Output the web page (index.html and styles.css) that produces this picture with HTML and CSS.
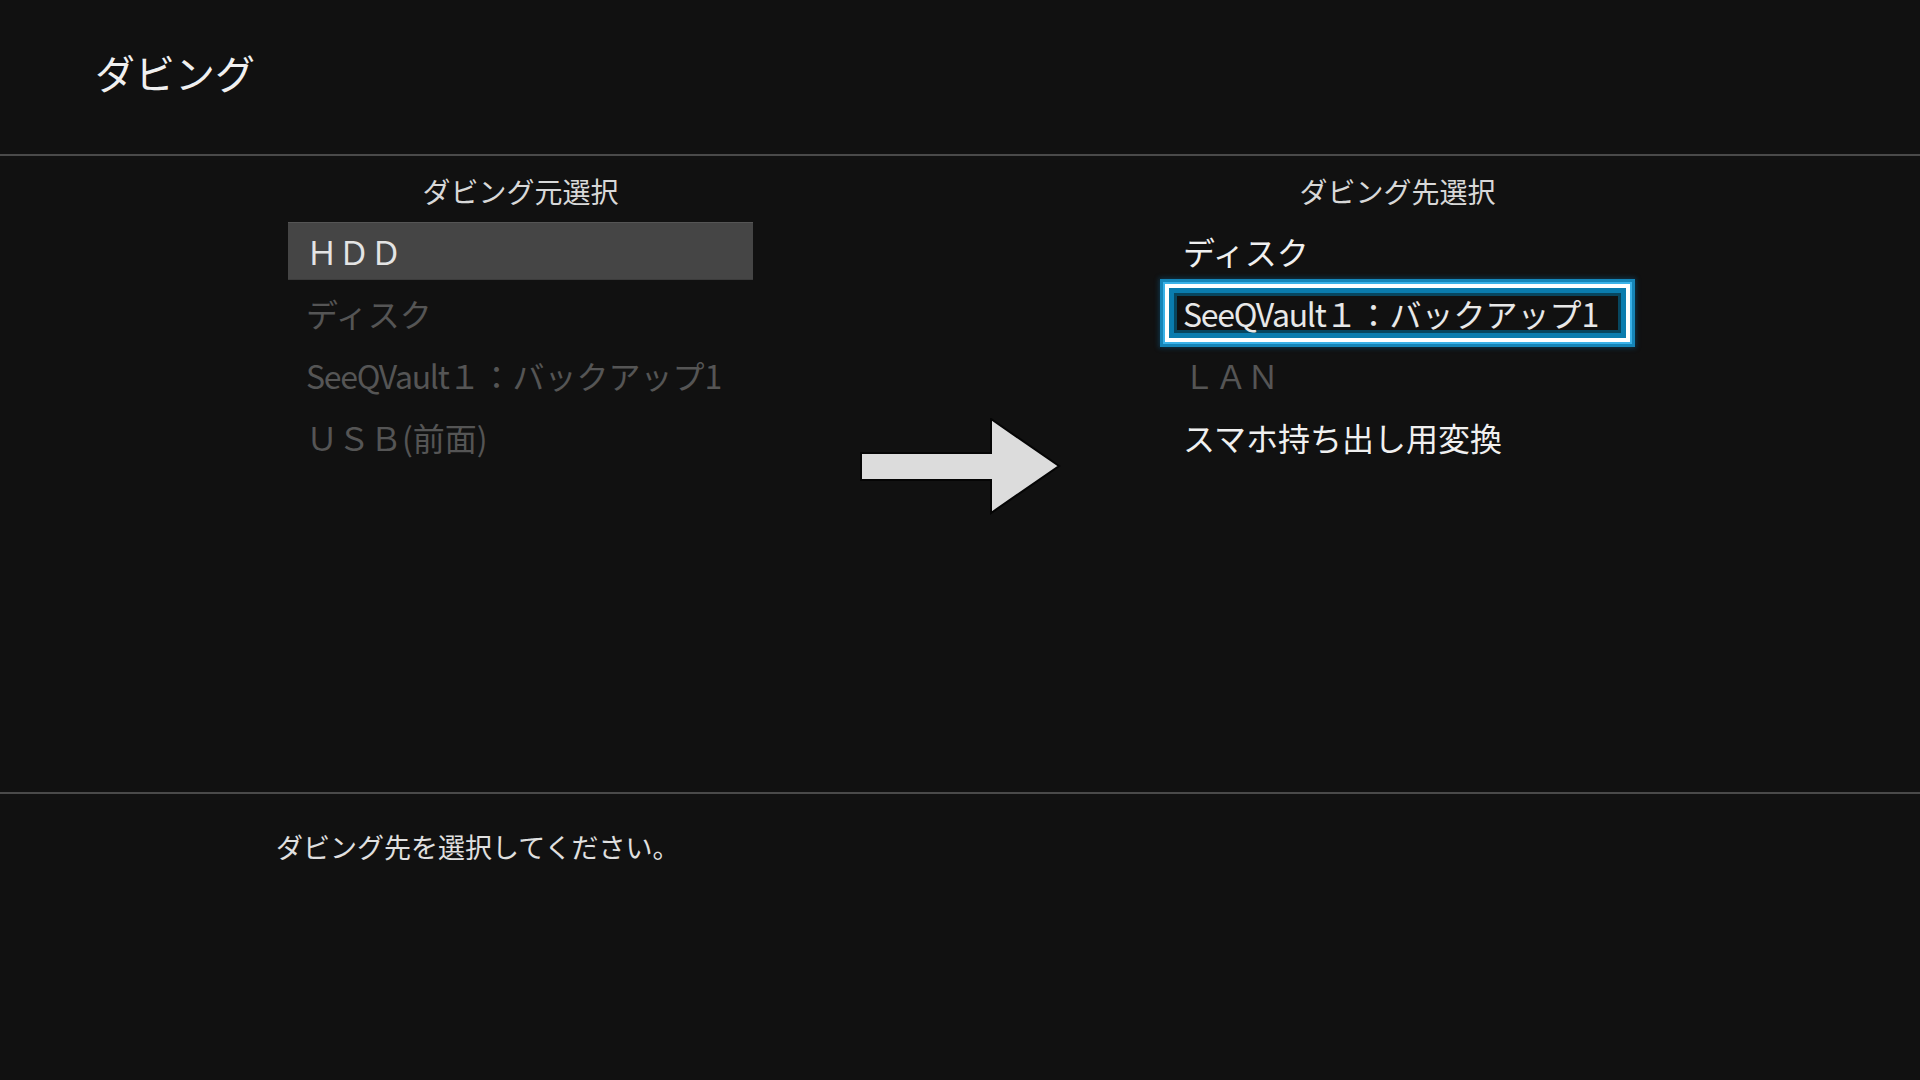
FILE: index.html
```html
<!DOCTYPE html>
<html lang="ja">
<head>
    <meta charset="UTF-8">
    <meta name="viewport" content="width=device-width, initial-scale=1.0">
    <title>ダビング</title>
    <link rel="stylesheet" href="styles.css">
</head>
<body>

    <div class="top-bar">
        <h1>ダビング</h1>
    </div>

    <div class="main">
        <div class="column">
            <div class="column-title">ダビング元選択</div>
            <div class="item-list">
                <div class="item selected">ＨＤＤ</div>
                <div class="item disabled">ディスク</div>
                <div class="item disabled"><span class="latin">SeeQVault</span>１：バックアップ1</div>
                <div class="item disabled">ＵＳＢ(前面)</div>
            </div>
        </div>

        <div class="arrow">
            <svg width="201" height="97" viewBox="0 0 201 97">
                <polygon points="1,35 131,35 131,1 199,48 131,95 131,62 1,62" fill="#dcdcdc" stroke="#050505" stroke-width="2" stroke-linejoin="miter" />
            </svg>
        </div>

        <div class="column">
            <div class="column-title">ダビング先選択</div>
            <div class="item-list">
                <div class="item">ディスク</div>
                <div class="item focused"><span class="latin">SeeQVault</span>１：バックアップ1</div>
                <div class="item disabled">ＬＡＮ</div>
                <div class="item">スマホ持ち出し用変換</div>
            </div>
        </div>
    </div>

    <div class="bottom-bar">
        <p class="hint">ダビング先を選択してください。</p>
    </div>

</body>
</html>
```

FILE: styles.css
```css
body {
    font-family: "Noto Sans CJK JP", "Noto Sans", sans-serif;
    background-color: #111;
    color: #eee;
    margin: 0;
    padding: 0;
    width: 1920px;
    height: 1080px;
    overflow: hidden;
}

.top-bar {
    height: 156px;
    box-sizing: border-box;
    padding: 52px 0 0 95px;
    border-bottom: 2px solid #4a4a4a;
}

.top-bar h1 {
    margin: 0;
    font-size: 40px;
    font-weight: normal;
    line-height: 1;
    color: #f0f0f0;
}

.main {
    height: 638px;
    box-sizing: border-box;
    padding: 21px 0 0 288px;
    display: flex;
    align-items: flex-start;
    border-bottom: 2px solid #4a4a4a;
}

.column {
    width: 465px;
}

.column-title {
    font-size: 28px;
    line-height: 1;
    text-align: center;
    color: #d8d8d8;
    margin-bottom: 17px;
}

.item-list {
    display: flex;
    flex-direction: column;
    gap: 4px;
}

.item {
    height: 58px;
    line-height: 58px;
    font-size: 32px;
    padding-left: 18px;
    white-space: nowrap;
    color: #f0f0f0;
}

.item .latin {
    letter-spacing: -1.3px;
}

.item.selected {
    background-color: #454545;
    box-shadow: inset 0 1px 0 #555, inset 0 -1px 0 #3c3c3c;
    color: #e4e4e4;
}

.item.disabled {
    color: #555;
}

.item.focused {
    box-sizing: border-box;
    padding-left: 14px;
    line-height: 50px;
    border: 4px solid #fff;
    color: #e8e8e8;
    box-shadow:
        inset 0 0 0 5px #0a7cae,
        inset 0 0 0 8px #07465f,
        0 0 0 2px #3ab2e8,
        0 0 0 5px #1585b8,
        0 0 5px 6px rgba(10, 100, 150, 0.45);
}

.arrow {
    width: 201px;
    margin: 241px 104px 0 107px;
    flex-shrink: 0;
}

.arrow svg {
    display: block;
}

.bottom-bar {
    padding: 39px 0 0 276px;
}

.hint {
    margin: 0;
    font-size: 27px;
    line-height: 1;
    color: #e0e0e0;
}
```
